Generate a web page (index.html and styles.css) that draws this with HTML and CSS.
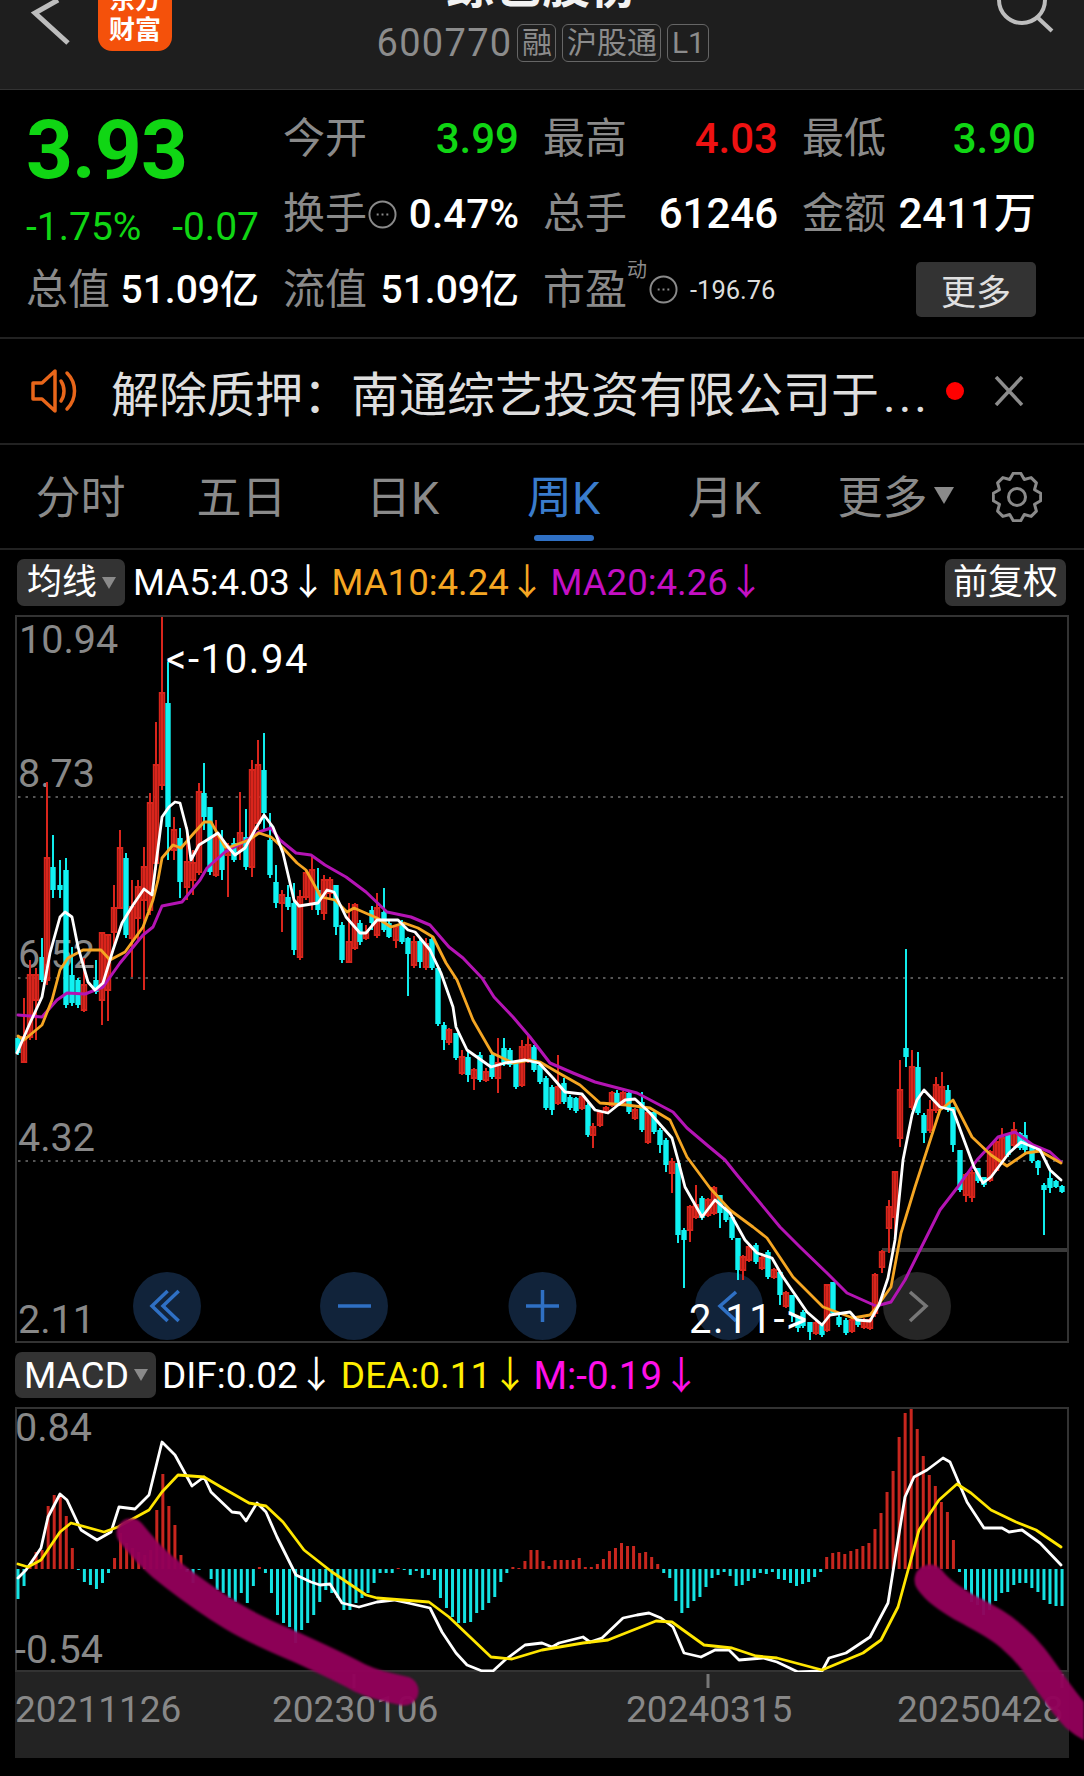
FILE: index.html
```html
<!DOCTYPE html>
<html lang="zh-CN">
<head>
<meta charset="utf-8">
<title>综艺股份 600770</title>
<link rel="stylesheet" href="styles.css">
</head>
<body>
<div class="page">
  <header class="header">
    <div class="header-left">
      <svg class="back" viewBox="0 0 40 60" width="40" height="60"><path d="M28 0 L5 13 L38 43"/></svg>
      <div class="logo"><span>东方</span><span>财富</span></div>
    </div>
    <div class="header-center">
      <div class="title">综艺股份</div>
      <div class="sub">
        <span class="code">600770</span>
        <span class="tag">融</span><span class="tag">沪股通</span><span class="tag">L1</span>
      </div>
    </div>
    <div class="header-right">
      <svg class="search" viewBox="0 0 60 40" width="60" height="40"><circle cx="26" cy="0" r="23"/><path d="M41 17 L56 31"/></svg>
    </div>
  </header>

  <section class="quote">
    <div class="price-block">
      <div class="price">3.93</div>
      <div class="change"><span>-1.75%</span><span>-0.07</span></div>
    </div>
    <div class="cell"><span class="lab">今开</span><span class="val green">3.99</span></div>
    <div class="cell"><span class="lab">最高</span><span class="val red">4.03</span></div>
    <div class="cell"><span class="lab">最低</span><span class="val green">3.90</span></div>
    <div class="cell"><span class="lab">换手</span><svg class="dots" viewBox="0 0 30 30"><circle cx="15" cy="15" r="13.5"/><path d="M9 15h2M14 15h2M19 15h2"/></svg><span class="val grow turn">0.47%</span></div>
    <div class="cell"><span class="lab">总手</span><span class="val">61246</span></div>
    <div class="cell"><span class="lab">金额</span><span class="val">2411万</span></div>
    <div class="cell small"><span class="lab">总值</span><span class="val">51.09亿</span></div>
    <div class="cell small"><span class="lab">流值</span><span class="val">51.09亿</span></div>
    <div class="cell small pe"><span class="lab">市盈</span><span class="sup">动</span><svg class="dots" viewBox="0 0 30 30"><circle cx="15" cy="15" r="13.5"/><path d="M9 15h2M14 15h2M19 15h2"/></svg><span class="tiny">-196.76</span></div>
    <div class="cell end"><span class="more">更多</span></div>
  </section>

  <section class="notice">
    <svg class="speaker" viewBox="0 0 50 44" width="50" height="44"><path d="M2 14h9L24 2v40L11 30H2z"/><path d="M30 12c4 6 4 14 0 20"/><path d="M36 4c10 10 10 26 0 36"/></svg>
    <div class="notice-text">解除质押：南通综艺投资有限公司于<span class="ell">...</span></div>
    <span class="dot"></span>
    <svg class="close" viewBox="0 0 30 30" width="30" height="30"><path d="M2 1 L28 29 M28 1 L2 29"/></svg>
  </section>

  <nav class="tabs">
    <div class="tab-list">
      <span class="tab">分时</span>
      <span class="tab">五日</span>
      <span class="tab">日K</span>
      <span class="tab active">周K</span>
      <span class="tab">月K</span>
      <span class="tab last">更多<i class="caret"></i></span>
    </div>
    <svg class="gear" viewBox="0 0 50 50" width="50" height="50"><path d="M21.25 1.3H28.75L32.27 7.45L39.1 5.6L44.4 10.9L42.55 17.73L48.7 21.25V28.75L42.55 32.27L44.4 39.1L39.1 44.4L32.27 42.55L28.75 48.7H21.25L17.73 42.55L10.9 44.4L5.6 39.1L7.45 32.27L1.3 28.75V21.25L7.45 17.73L5.6 10.9L10.9 5.6L17.73 7.45Z"/><circle cx="25" cy="25" r="8.5"/></svg>
  </nav>

  <div class="legend">
    <span class="chip"><b>均线</b><i class="caret sm"></i></span>
    <span class="ind white first">MA5:4.03↓</span>
    <span class="ind orange">MA10:4.24↓</span>
    <span class="ind purple">MA20:4.26↓</span>
    <span class="chip right"><b>前复权</b></span>
  </div>

  <svg id="kline" class="chart kline" viewBox="0 615 1084 728" width="1084" height="728">
    <rect class="frame" x="16" y="616" width="1052" height="726"/>
    <path class="grid" d="M18 797H1067M18 978H1067M18 1161H1067"/>
    <text class="axis" x="19" y="653">10.94</text>
    <text class="axis" x="18" y="787">8.73</text>
    <text class="axis" x="18" y="968">6.52</text>
    <text class="axis" x="18" y="1151">4.32</text>
    <text class="axis" x="18" y="1333">2.11</text>
    <path class="thick" d="M882 1250H1067"/>
    <circle class="btn" cx="167" cy="1306" r="34"/>
    <circle class="btn" cx="354" cy="1306" r="34"/>
    <circle class="btn" cx="542.5" cy="1306" r="34"/>
    <circle class="btn" cx="729" cy="1306" r="34"/>
    <circle class="btn off" cx="917" cy="1306" r="34"/>
    <path class="ico" d="M167.6 1291L152 1306L167.6 1321M178.7 1291L163 1306L178.7 1321"/>
    <path class="ico" d="M338 1306H371"/>
    <path class="ico" d="M526 1306H559M542.5 1290V1322"/>
    <path class="ico" d="M736 1292L720 1306L736 1321"/>
    <path class="ico off" d="M910 1292L926 1306L910 1321"/>
    <g id="candles"></g>
    <g id="malines"></g>
    <text class="mark" x="166" y="673">&lt;-10.94</text>
    <text class="mark" x="689" y="1333">2.11-&gt;</text>
  </svg>

  <div class="legend second">
    <span class="chip wide"><b>MACD</b><i class="caret sm"></i></span>
    <span class="ind white">DIF:0.02↓</span>
    <span class="ind yellow">DEA:0.11↓</span>
    <span class="ind pink">M:-0.19↓</span>
  </div>

  <svg id="macd" class="chart macd" viewBox="0 1407 1084 265" width="1084" height="265">
    <rect class="frame" x="16" y="1408" width="1052" height="263"/>
    <g id="bars"></g>
    <g id="macdlines"></g>
    <text class="axis" x="15" y="1441">0.84</text>
    <text class="axis" x="15" y="1663">-0.54</text>
  </svg>

  <svg class="chart footer" viewBox="0 1672 1084 86" width="1084" height="86">
    <rect class="foot-bg" x="15" y="1672" width="1054" height="86"/>
    <path class="tick" d="M354 1674V1688M708 1674V1688M1062 1674V1688"/>
    <text class="date" x="15" y="1722">20211126</text>
    <text class="date" x="272" y="1722">20230106</text>
    <text class="date" x="626" y="1722">20240315</text>
    <text class="date" x="897" y="1722">20250428</text>
  </svg>

  <svg class="scribble" viewBox="0 0 1084 1776" width="1084" height="1776">
    <path d="M131 1533C145 1550 155 1562 173 1575C195 1592 212 1604 232 1616C255 1630 275 1638 298 1648C320 1658 342 1668 360 1678C375 1685 390 1688 404 1691"/>
    <path class="broad" d="M930 1580C937 1590 947 1597 962 1606C982 1617 998 1624 1012 1637C1030 1652 1040 1668 1051 1684C1061 1698 1068 1708 1076 1716C1082 1721 1088 1725 1094 1728"/>
  </svg>
</div>
<script src="chart.js"></script>
</body>
</html>
```

FILE: styles.css
```css
* { box-sizing: border-box; }
html, body { margin: 0; background: #000; }
body {
  width: 1084px;
  height: 1776px;
  overflow: hidden;
  font-family: Roboto, "Noto Sans CJK SC", sans-serif;
  color: #fff;
}
.page { position: relative; width: 1084px; height: 1776px; }

/* header */
.header {
  display: grid;
  grid-template-columns: 1fr auto 1fr;
  height: 90px;
  background: #1e1e1e;
  border-bottom: 1px solid #333;
  overflow: hidden;
}
.header-left { display: flex; padding-left: 30px; }
.back { overflow: visible; }
.back path { fill: none; stroke: #bdbdbd; stroke-width: 5; }
.logo {
  display: flex;
  flex-direction: column;
  align-items: center;
  justify-content: flex-end;
  width: 74px;
  height: 81px;
  margin: -30px 0 0 28px;
  padding-bottom: 6px;
  border-radius: 0 0 14px 14px;
  background: #f4510b;
  font-size: 26px;
  line-height: 30px;
  font-weight: 700;
}
.header-center { display: flex; flex-direction: column; align-items: center; margin-top: -38px; }
.title { font-size: 48px; line-height: 50px; font-weight: 700; color: #f2f2f2; }
.sub { display: flex; align-items: center; gap: 6px; margin: 10px 0 0 2px; color: #8c8c8c; }
.code { font-size: 38px; line-height: 42px; letter-spacing: 1.3px; margin-right: -1px; }
.tag {
  display: inline-flex;
  align-items: center;
  justify-content: center;
  height: 38px;
  padding: 0 3.5px;
  border: 1.5px solid #666;
  border-radius: 6px;
  font-size: 30px;
  line-height: 34px;
}
.header-right { display: flex; justify-content: flex-end; padding-right: 28px; }
.search { overflow: visible; }
.search circle, .search path { fill: none; stroke: #bdbdbd; stroke-width: 4; }

/* quote */
.quote {
  display: grid;
  grid-template-columns: 233px 236px 235px 234px;
  grid-template-rows: 75.5px 75.5px 75.5px;
  column-gap: 24px;
  height: 249px;
  padding: 11px 0 0 26px;
  border-bottom: 2px solid #222;
}
.price-block { grid-row: 1 / 3; }
.price { font-size: 82px; line-height: 98px; font-weight: 700; color: #10d614; letter-spacing: -1px; }
.change { display: flex; justify-content: space-between; padding-top: 2px; font-size: 39px; line-height: 52px; color: #10d614; }
.cell { display: flex; align-items: center; justify-content: space-between; }
.lab { flex: none; font-size: 42px; line-height: 48px; color: #8a8a8a; white-space: nowrap; }
.val { font-size: 42px; line-height: 48px; font-weight: 500; color: #fff; white-space: nowrap; }
.small .val { font-size: 39px; }
.val.green { color: #10d614; }
.val.red { color: #ee1212; }
.grow { margin-left: auto; }
.turn { font-size: 40.5px; }
.dots { width: 29px; height: 29px; margin-left: 1px; flex: none; }
.dots circle { fill: none; stroke: #8a8a8a; stroke-width: 2; }
.dots path { fill: none; stroke: #8a8a8a; stroke-width: 2; }
.pe { justify-content: flex-start; }
.sup { flex: none; align-self: flex-start; width: 21px; margin-top: 5px; font-size: 20px; line-height: 26px; color: #8a8a8a; }
.tiny { flex: none; margin-left: 12px; font-size: 25.5px; color: #ddd; white-space: nowrap; }
.end { justify-content: flex-end; }
.more {
  display: flex;
  align-items: center;
  justify-content: center;
  width: 120px;
  height: 55px;
  border-radius: 5px;
  background: #333;
  font-size: 35px;
  color: #e0e0e0;
}

/* notice */
.notice {
  display: flex;
  align-items: center;
  height: 106px;
  padding-left: 31px;
  border-bottom: 2px solid #222;
}
.speaker { flex: none; }
.speaker path { fill: none; stroke: #e8661a; stroke-width: 3.5; stroke-linejoin: round; stroke-linecap: round; }
.notice-text { margin: 9px 0 0 30px; font-size: 48px; line-height: 60px; color: #dedede; white-space: nowrap; width: 817px; }
.ell { margin-left: 4px; letter-spacing: 3px; }
.dot { width: 18px; height: 18px; margin-left: 18px; border-radius: 50%; background: #f00; flex: none; }
.close { margin-left: 30px; flex: none; }
.close path { fill: none; stroke: #8c8c8c; stroke-width: 3.5; }

/* tabs */
.tabs { display: flex; align-items: center; height: 105px; border-bottom: 2px solid #222; }
.tab-list { display: grid; grid-template-columns: repeat(6, 161px); width: 992px; }
.tab {
  position: relative;
  display: flex;
  align-items: center;
  justify-content: center;
  height: 103px;
  padding-bottom: 5px;
  font-size: 45px;
  color: #8a8a8a;
}
.tab.active { color: #3a7ccc; }
.tab.active::after {
  content: "";
  position: absolute;
  left: 50%;
  bottom: 7px;
  width: 60px;
  height: 6px;
  margin-left: -30px;
  border-radius: 3px;
  background: #2f70c4;
}
.tab.last { padding-left: 20px; }
.caret {
  display: inline-block;
  margin: 3px 0 0 6px;
  border-left: 10px solid transparent;
  border-right: 10px solid transparent;
  border-top: 17px solid #8a8a8a;
}
.caret.sm { margin: 0 0 0 5px; border-left-width: 7px; border-right-width: 7px; border-top-width: 12px; }
.gear { flex: none; }
.gear path, .gear circle { fill: none; stroke: #8a8a8a; stroke-width: 3; stroke-linejoin: round; }

/* legends */
.legend { display: flex; align-items: center; gap: 5px; height: 65px; padding: 0 18px 0 17px; }
.first { margin-left: 3px; }
.chip {
  display: inline-flex;
  align-items: center;
  height: 47px;
  padding: 0 9px 0 10px;
  border-radius: 7px;
  background: #333;
}
.chip b { font-weight: 400; font-size: 35px; line-height: 47px; color: #fff; }
.chip.right { margin-left: auto; padding: 0 8px; }
.chip.wide { padding: 0 8px 0 9px; }
.chip.wide b { font-size: 37px; }
.ind { font-size: 36.6px; line-height: 47px; white-space: nowrap; }
.white { color: #fff; }
.orange { color: #f5a623; }
.purple { color: #c410c4; }
.yellow { color: #ffee00; }
.pink { color: #ff10e8; }
.second { height: 64px; padding-left: 15px; gap: 6px; }
.second .chip { height: 46px; }
.second .ind { font-size: 37px; }
.second .pink { margin-left: -1px; font-size: 38.5px; }

/* charts */
.chart { display: block; overflow: visible; }
.frame { fill: none; stroke: #333; stroke-width: 2; }
.grid { fill: none; stroke: #555; stroke-width: 2; stroke-dasharray: 2.5 5; }
.axis { font-size: 39.5px; fill: #888; }
.mark { font-size: 40px; fill: #fff; letter-spacing: 1.6px; }
.thick { fill: none; stroke: #3a3a3a; stroke-width: 4; }
.btn { fill: #11233a; }
.btn.off { fill: #262626; }
.ico { fill: none; stroke: #2f70c4; stroke-width: 3.5; }
.ico.off { stroke: #777; }
.wick { stroke-width: 2; }
.wick-up { stroke: #d9251c; }
.wick-down { stroke: #10ecec; }
.body-up { fill: none; stroke: #d9251c; stroke-width: 2; }
.body-down { fill: #10f2f2; }
.line { fill: none; stroke-linejoin: round; stroke-linecap: round; stroke-width: 2.8; }
.ma5, .dif { stroke: #fff; }
.ma10 { stroke: #f5a623; }
.ma20 { stroke: #b414b4; stroke-width: 3; }
.dea { stroke: #ffe600; }
.bar-up { fill: #c8261e; }
.bar-down { fill: #14e2e2; }
.foot-bg { fill: #232323; }
.tick { fill: none; stroke: #777; stroke-width: 3; }
.date { font-size: 37px; fill: #888; }

/* hand-drawn marks over the chart */
.scribble { position: absolute; left: 0; top: 0; pointer-events: none; filter: blur(1px); }
.scribble path { fill: none; stroke: #92005a; stroke-width: 29; stroke-linecap: round; stroke-linejoin: round; opacity: .96; }
.scribble .broad { stroke-width: 31; }
```

FILE: chart.js
```js
var NS = 'http://www.w3.org/2000/svg';
function el(parent, tag, attrs) {
  var n = document.createElementNS(NS, tag);
  for (var k in attrs) n.setAttribute(k, attrs[k]);
  parent.appendChild(n);
  return n;
}
// x, high, body top, body bottom, low, falling?
var candles = [
[18,1036,1038,1053,1055,1],[24,998,1037,1062,1063,0],[30,960,975,1037,1040,0],[36,968,975,1000,1040,0],[42,938,957,980,982,1],
[47,782,858,980,985,0],[53,835,867,890,898,1],[60,860,885,890,898,1],[66,858,870,1005,1008,1],[72,947,975,1003,1006,1],[78,978,980,1005,1008,1],
[84,958,985,1010,1012,0],[96,960,980,992,994,1],[102,933,933,1000,1025,0],[108,935,935,990,1021,0],[114,885,908,932,945,0],[120,830,848,908,908,0],
[126,853,858,935,938,1],[132,880,907,938,977,0],[138,880,887,918,940,0],[144,847,867,900,990,0],[150,793,803,910,915,0],[156,722,765,863,870,0],
[162,617,693,785,790,0],[168,662,703,827,860,1],[174,817,830,850,860,0],[180,828,838,882,898,1],[187,827,862,887,900,0],[193,850,863,880,895,0],
[199,783,792,872,875,0],[204,763,793,817,830,1],[210,807,807,872,875,1],[216,820,837,875,877,0],[222,830,840,870,880,1],[228,843,847,855,897,0],
[234,838,843,860,862,1],[240,792,833,850,860,0],[246,809,837,867,870,1],[252,760,770,867,877,0],[258,740,765,823,830,0],[264,733,770,813,830,1],
[270,813,840,875,878,1],[276,865,882,903,908,1],[282,890,895,903,932,0],[288,885,897,907,910,1],[294,883,903,950,955,1],[300,890,897,957,960,0],
[306,870,873,897,900,0],[312,857,870,903,910,0],[318,868,890,910,915,1],[324,875,880,913,920,0],[330,877,880,893,900,0],[336,885,885,927,935,1],
[342,922,925,960,963,1],[349,903,942,962,963,0],[355,903,905,948,950,0],[360,920,923,942,945,1],[366,925,933,938,940,0],[372,906,910,923,930,1],
[377,893,908,935,938,0],[384,888,912,930,932,1],[389,920,923,937,938,1],[396,925,927,940,948,0],[402,920,923,942,944,1],[408,937,938,954,996,1],
[414,936,942,965,968,0],[420,938,941,962,968,1],[426,938,944,967,970,0],[432,936,939,968,970,1],[438,968,968,1024,1026,1],[444,1022,1025,1040,1050,1],
[449,1028,1030,1042,1045,0],[456,1033,1033,1058,1060,1],[462,1050,1057,1073,1075,0],[468,1052,1057,1075,1082,1],[474,1068,1070,1078,1090,0],
[480,1052,1055,1080,1082,1],[486,1068,1072,1080,1082,0],[492,1053,1055,1077,1079,1],[498,1038,1063,1078,1093,0],[504,1038,1048,1063,1066,1],
[510,1048,1050,1065,1067,1],[516,1061,1063,1087,1089,1],[522,1040,1047,1085,1087,0],[528,1035,1045,1060,1063,0],[534,1045,1047,1070,1072,1],
[540,1063,1065,1082,1084,1],[546,1076,1078,1108,1110,1],[552,1085,1087,1110,1115,1],[558,1055,1087,1103,1105,0],[564,1078,1083,1102,1104,1],
[570,1095,1097,1108,1110,1],[576,1097,1098,1111,1113,1],[582,1095,1097,1108,1110,0],[588,1103,1105,1135,1137,1],[593,1123,1127,1135,1148,0],
[600,1111,1113,1125,1127,0],[606,1106,1108,1112,1114,0],[612,1091,1093,1105,1107,0],[617,1090,1093,1103,1105,1],[623,1091,1093,1103,1105,0],
[629,1091,1093,1112,1114,1],[635,1108,1110,1118,1120,0],[642,1092,1102,1130,1132,1],[648,1111,1113,1142,1144,0],[654,1110,1112,1132,1134,1],
[660,1128,1130,1145,1153,1],[666,1138,1140,1165,1172,1],[672,1158,1162,1173,1193,0],[678,1163,1163,1235,1243,1],[684,1228,1230,1240,1288,1],
[690,1205,1207,1230,1242,0],[696,1185,1205,1217,1219,0],[702,1196,1198,1218,1220,1],[708,1198,1200,1215,1217,0],[714,1186,1188,1213,1215,0],
[720,1195,1195,1213,1228,1],[726,1205,1207,1220,1222,1],[732,1215,1217,1238,1240,1],[738,1238,1238,1270,1280,1],[743,1255,1257,1270,1280,0],
[749,1245,1247,1260,1262,0],[756,1243,1245,1262,1264,1],[762,1256,1258,1268,1270,0],[768,1250,1252,1277,1279,1],[774,1268,1270,1277,1279,0],
[780,1272,1272,1295,1305,1],[786,1291,1293,1306,1308,0],[792,1295,1295,1315,1322,1],[798,1317,1317,1328,1332,1],[803,1310,1312,1326,1328,1],
[810,1322,1322,1332,1340,1],[816,1321,1323,1333,1335,0],[822,1325,1325,1335,1337,1],[827,1285,1285,1330,1332,0],[833,1282,1282,1313,1315,1],
[839,1315,1317,1325,1327,1],[846,1318,1320,1333,1335,1],[852,1318,1320,1331,1333,0],[858,1318,1320,1325,1327,1],[864,1318,1320,1327,1329,0],
[870,1318,1320,1328,1330,0],[875,1273,1275,1313,1317,0],[882,1250,1252,1267,1273,0],[889,1200,1207,1228,1253,0],[895,1172,1172,1217,1235,0],
[900,1060,1090,1138,1147,0],[906,949,1048,1057,1067,1],[912,1050,1067,1107,1110,0],[918,1052,1067,1113,1115,1],[924,1113,1115,1133,1143,1],
[930,1100,1110,1130,1133,0],[936,1077,1085,1110,1113,0],[942,1072,1087,1107,1110,0],[948,1085,1090,1110,1112,1],[953,1107,1107,1145,1152,1],
[960,1150,1150,1190,1192,1],[966,1173,1175,1195,1202,0],[972,1170,1173,1197,1202,0],[978,1168,1168,1181,1183,1],[984,1177,1177,1185,1187,1],
[990,1150,1152,1180,1182,0],[996,1140,1142,1170,1172,0],[1002,1128,1138,1160,1162,0],[1008,1133,1135,1155,1157,1],[1014,1122,1130,1145,1147,0],
[1020,1132,1133,1148,1150,1],[1025,1122,1135,1150,1153,1],[1032,1143,1145,1161,1163,1],[1038,1160,1161,1168,1175,1],[1044,1183,1185,1190,1235,1],
[1050,1168,1178,1188,1193,1],[1056,1180,1181,1187,1188,1],[1062,1185,1186,1192,1193,1]
];
var ma5 = [[17,1053],[30,1023],[42,997],[50,953],[60,917],[65,912],[72,917],[78,947],[88,982],[95,990],[103,983],[113,950],[122,923],[133,905],[144,889],[152,895],[162,817],[169,807],[175,802],[180,803],[187,830],[191,860],[199,845],[207,840],[218,833],[228,847],[235,855],[245,848],[256,828],[264,815],[273,827],[283,853],[294,900],[299,906],[318,903],[327,890],[334,892],[346,917],[360,933],[366,933],[377,920],[398,920],[408,930],[415,932],[430,950],[441,973],[453,1007],[456,1027],[467,1050],[491,1067],[505,1063],[525,1060],[539,1063],[553,1078],[565,1092],[582,1094],[595,1110],[608,1113],[618,1105],[625,1100],[635,1099],[650,1113],[672,1138],[678,1160],[685,1187],[702,1217],[715,1200],[730,1213],[745,1240],[757,1253],[772,1258],[783,1277],[807,1312],[822,1325],[830,1315],[850,1312],[857,1320],[870,1321],[879,1305],[888,1278],[895,1240],[903,1160],[912,1115],[917,1100],[924,1090],[940,1107],[953,1110],[964,1140],[974,1167],[983,1183],[991,1177],[1009,1153],[1021,1142],[1040,1150],[1050,1170],[1061,1180]];
var ma10 = [[18,1036],[24,1040],[42,1025],[52,1000],[60,970],[68,958],[83,950],[101,950],[110,960],[125,952],[143,927],[153,900],[158,880],[162,858],[173,845],[181,848],[194,833],[204,822],[211,822],[225,847],[230,847],[249,840],[259,833],[271,837],[283,848],[297,863],[306,870],[321,897],[335,900],[347,912],[354,908],[377,918],[391,927],[404,923],[418,928],[433,937],[446,963],[457,980],[473,1020],[492,1053],[513,1063],[530,1060],[540,1062],[557,1072],[580,1085],[600,1103],[627,1105],[650,1108],[670,1120],[687,1157],[710,1188],[730,1210],[753,1227],[767,1238],[793,1277],[823,1307],[853,1318],[870,1315],[876,1308],[891,1287],[901,1233],[915,1187],[940,1110],[953,1100],[972,1137],[991,1155],[1007,1166],[1026,1153],[1040,1151],[1061,1163]];
var ma20 = [[18,1015],[42,1017],[57,1000],[67,993],[85,994],[103,987],[120,963],[143,935],[153,927],[162,906],[182,902],[200,880],[207,868],[225,852],[242,843],[259,832],[271,828],[280,840],[296,853],[311,855],[325,865],[346,877],[366,892],[387,912],[411,917],[430,925],[449,947],[463,958],[482,978],[494,997],[513,1017],[530,1037],[550,1063],[573,1073],[595,1082],[637,1093],[673,1112],[687,1128],[707,1145],[725,1160],[737,1175],[780,1227],[800,1247],[827,1273],[847,1293],[876,1306],[891,1302],[905,1280],[940,1210],[957,1188],[977,1160],[998,1137],[1015,1132],[1033,1145],[1050,1152],[1061,1162]];
var dif = [[18,1578],[26,1570],[41,1548],[48,1517],[60,1494],[67,1500],[81,1530],[97,1540],[111,1532],[119,1507],[135,1509],[149,1495],[162,1442],[175,1455],[192,1486],[204,1477],[211,1492],[232,1512],[240,1513],[246,1521],[257,1503],[266,1512],[277,1537],[287,1557],[296,1575],[311,1582],[320,1585],[330,1584],[342,1603],[359,1607],[377,1602],[394,1600],[408,1603],[430,1608],[442,1632],[456,1653],[467,1665],[482,1671],[493,1671],[505,1660],[525,1645],[542,1643],[552,1647],[559,1643],[583,1637],[590,1642],[602,1638],[623,1618],[637,1615],[649,1613],[661,1618],[673,1627],[684,1653],[701,1657],[715,1650],[729,1650],[739,1660],[763,1658],[777,1662],[798,1672],[822,1671],[829,1658],[846,1653],[870,1637],[888,1603],[898,1540],[905,1497],[914,1477],[927,1470],[943,1458],[950,1462],[967,1502],[984,1528],[1002,1528],[1009,1532],[1022,1530],[1040,1543],[1061,1565]];
var dea = [[18,1564],[28,1567],[41,1560],[60,1532],[71,1523],[104,1532],[118,1527],[149,1510],[162,1492],[178,1475],[204,1477],[221,1487],[249,1503],[266,1506],[283,1522],[304,1550],[332,1572],[366,1595],[377,1598],[429,1602],[449,1617],[491,1657],[512,1659],[542,1650],[583,1643],[608,1640],[656,1621],[672,1622],[704,1645],[732,1648],[756,1656],[777,1658],[822,1670],[863,1653],[881,1640],[898,1607],[919,1530],[939,1500],[957,1484],[971,1493],[991,1510],[1016,1522],[1036,1530],[1061,1547]];
// height in px from the zero line: positive falls (cyan), negative rises (red)
var hist = [30,17,-2,-17,-19,-63,-74,-72,-53,-21,1,13,16,20,14,4,-11,-36,-26,-21,-17,-14,-19,-59,-95,-63,-44,-14,3,14,1,0,10,21,24,29,33,24,34,17,-2,4,24,46,54,58,74,61,54,46,33,21,24,29,41,41,34,29,24,14,4,4,4,-1,1,6,2,9,6,11,29,39,48,54,54,53,44,41,34,28,13,4,-2,-1,-8,-19,-19,-8,-3,-9,-9,-9,-9,-11,-2,-2,-5,-10,-18,-21,-26,-23,-23,-16,-17,-12,-5,4,9,32,44,39,32,28,18,9,6,3,7,17,16,12,9,4,5,3,10,11,14,17,15,13,8,3,-12,-16,-17,-15,-18,-20,-23,-26,-40,-56,-77,-98,-132,-156,-160,-140,-113,-94,-83,-67,-57,-29,3,21,33,36,46,41,32,24,23,16,14,14,19,23,31,35,37,37];

var cg = document.getElementById('candles');
candles.forEach(function (c) {
  var down = c[5] === 1;
  el(cg, 'line', { x1: c[0], x2: c[0], y1: c[1], y2: c[4], 'class': 'wick ' + (down ? 'wick-down' : 'wick-up') });
  if (down) el(cg, 'rect', { x: c[0] - 2.7, y: c[2], width: 5.4, height: Math.max(c[3] - c[2], 1), 'class': 'body-down' });
  else el(cg, 'rect', { x: c[0] - 2.2, y: c[2], width: 4.4, height: Math.max(c[3] - c[2], 1), 'class': 'body-up' });
});
function line(parent, pts, cls) {
  el(parent, 'polyline', { points: pts.map(function (p) { return p.join(','); }).join(' '), 'class': 'line ' + cls });
}
var mg = document.getElementById('malines');
line(mg, ma20, 'ma20');
line(mg, ma10, 'ma10');
line(mg, ma5, 'ma5');
var bg = document.getElementById('bars');
hist.forEach(function (v, i) {
  if (!v) return;
  var x = 18 + 6.035 * i - 1.5;
  el(bg, 'rect', { x: x, y: v > 0 ? 1569 : 1569 + v, width: 3, height: Math.abs(v), 'class': v > 0 ? 'bar-down' : 'bar-up' });
});
var lg = document.getElementById('macdlines');
line(lg, dif, 'dif');
line(lg, dea, 'dea');
```
